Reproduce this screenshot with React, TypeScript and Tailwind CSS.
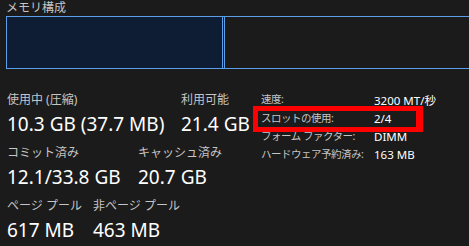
import React from "react";

const stats = [
  [
    { label: "使用中 (圧縮)", value: "10.3 GB (37.7 MB)", w: "w-[174px]" },
    { label: "利用可能", value: "21.4 GB", w: "" },
  ],
  [
    { label: "コミット済み", value: "12.1/33.8 GB", w: "w-[131px]" },
    { label: "キャッシュ済み", value: "20.7 GB", w: "" },
  ],
  [
    { label: "ページ プール", value: "617 MB", w: "w-[86px]" },
    { label: "非ページ プール", value: "463 MB", w: "" },
  ],
];

const specs = [
  { label: "速度:", value: "3200 MT/秒" },
  { label: "スロットの使用:", value: "2/4" },
  { label: "フォーム ファクター:", value: "DIMM" },
  { label: "ハードウェア予約済み:", value: "163 MB" },
];

export default function App() {
  return (
    <div
      className="w-[469px] h-[246px] overflow-hidden bg-[#1b1b1b] text-white"
      style={{ fontFamily: '"Noto Sans", "Noto Sans CJK JP", sans-serif' }}
    >
      <div className="pl-[6px] text-[12px] leading-[15px] text-[#c5c5c5]">メモリ構成</div>

      <div className="ml-[6px] mt-[1px] flex h-[53px] w-[480px] border border-[#5b9ee9]">
        <div className="w-[216px] bg-[#0e1d34] border-r border-[#5b9ee9]" />
        <div className="w-[1px] bg-[#0e1d34]" />
        <div className="flex-1 border-l border-[#5b9ee9]" />
      </div>

      <div className="mt-[23px] flex">
        <div className="w-[254px] pl-[7px]">
          {stats.map((row, i) => (
            <div key={i} className={`flex ${i > 0 ? "mt-[9px]" : ""}`}>
              {row.map((s) => (
                <div key={s.label} className={`shrink-0 ${s.w}`}>
                  <div className="text-[12px] leading-[16px] text-[#c5c5c5]">{s.label}</div>
                  <div className="mt-[4px] text-[19px] leading-[24px] text-white">{s.value}</div>
                </div>
              ))}
            </div>
          ))}
        </div>

        <div className="relative -mt-[1px] pl-[7px]">
          {specs.map((s) => (
            <div key={s.label} className="flex h-[18.3px] items-center">
              <div className="w-[113px] whitespace-nowrap text-[10.5px] tracking-[-0.5px] text-[#c5c5c5]">
                {s.label}
              </div>
              <div className="whitespace-nowrap text-[11.5px] text-white">{s.value}</div>
            </div>
          ))}
          <div className="absolute left-[-1px] top-[15px] h-[26px] w-[170px] border-[5px] border-r-[7px] border-[#ff0000]" />
        </div>
      </div>
    </div>
  );
}
